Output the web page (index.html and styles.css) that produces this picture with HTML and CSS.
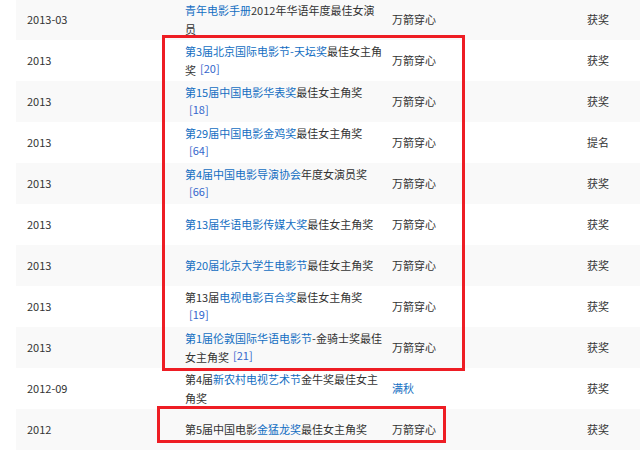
FILE: index.html
```html
<!DOCTYPE html>
<html lang="zh-CN">
<head>
    <meta charset="UTF-8">
    <meta name="viewport" content="width=device-width, initial-scale=1.0">
    <title>获奖记录</title>
    <link rel="stylesheet" href="styles.css">
</head>
<body>
    <div class="page">
        <table class="awards">
            <colgroup>
                <col class="col-year">
                <col class="col-award">
                <col class="col-work">
                <col class="col-result">
            </colgroup>
            <tbody>
                <tr>
                    <td>2013-03</td>
                    <td><a href="#">青年电影手册</a>2012年华语年度最佳女演员</td>
                    <td>万箭穿心</td>
                    <td>获奖</td>
                </tr>
                <tr>
                    <td>2013</td>
                    <td><a href="#">第3届北京国际电影节-天坛奖</a>最佳女主角奖<sup>[20]</sup></td>
                    <td>万箭穿心</td>
                    <td>获奖</td>
                </tr>
                <tr>
                    <td>2013</td>
                    <td><a href="#">第15届中国电影华表奖</a>最佳女主角奖<sup>[18]</sup></td>
                    <td>万箭穿心</td>
                    <td>获奖</td>
                </tr>
                <tr>
                    <td>2013</td>
                    <td><a href="#">第29届中国电影金鸡奖</a>最佳女主角奖<sup>[64]</sup></td>
                    <td>万箭穿心</td>
                    <td>提名</td>
                </tr>
                <tr>
                    <td>2013</td>
                    <td><a href="#">第4届中国电影导演协会</a>年度女演员奖<sup>[66]</sup></td>
                    <td>万箭穿心</td>
                    <td>获奖</td>
                </tr>
                <tr>
                    <td>2013</td>
                    <td><a href="#">第13届华语电影传媒大奖</a>最佳女主角奖</td>
                    <td>万箭穿心</td>
                    <td>获奖</td>
                </tr>
                <tr>
                    <td>2013</td>
                    <td><a href="#">第20届北京大学生电影节</a>最佳女主角奖</td>
                    <td>万箭穿心</td>
                    <td>获奖</td>
                </tr>
                <tr>
                    <td>2013</td>
                    <td>第13届<a href="#">电视电影百合奖</a>最佳女主角奖<sup>[19]</sup></td>
                    <td>万箭穿心</td>
                    <td>获奖</td>
                </tr>
                <tr>
                    <td>2013</td>
                    <td><a href="#">第1届伦敦国际华语电影节</a>-金骑士奖最佳女主角奖<sup>[21]</sup></td>
                    <td>万箭穿心</td>
                    <td>获奖</td>
                </tr>
                <tr>
                    <td>2012-09</td>
                    <td>第4届<a href="#">新农村电视艺术节</a>金牛奖最佳女主角奖</td>
                    <td><a href="#">满秋</a></td>
                    <td>获奖</td>
                </tr>
                <tr>
                    <td>2012</td>
                    <td>第5届中国电影<a href="#">金猛龙奖</a>最佳女主角奖</td>
                    <td>万箭穿心</td>
                    <td>获奖</td>
                </tr>
            </tbody>
        </table>
        <!-- highlight frames drawn over the table -->
        <div class="mark mark-big"></div>
        <div class="mark mark-small"></div>
    </div>
</body>
</html>
```

FILE: styles.css
```css
body {
    margin: 0;
    background: #ffffff;
    font-family: "Noto Sans CJK SC", "Noto Sans", sans-serif;
    font-size: 11px;
    color: #333333;
    overflow: hidden;
}
.page {
    position: relative;
    padding-left: 16px;
}
.awards {
    width: 624px;
    margin-top: -1px;
    border-collapse: collapse;
    border-spacing: 0;
    table-layout: fixed;
}
.col-year {
    width: 159px;
}
.col-award {
    width: 209px;
}
.col-work {
    width: 195px;
}
.awards tr:nth-child(odd) td {
    background: #f9f9f9;
}
.awards td {
    box-sizing: border-box;
    height: 41px;
    padding: 0 0 0 8px;
    line-height: 19px;
    vertical-align: middle;
}
.awards td:first-child {
    padding-left: 11px;
}
.awards td:nth-child(2) {
    padding-left: 10px;
}
a {
    color: #136ec2;
    text-decoration: none;
}
sup {
    color: #3366cc;
    font-size: 11px;
    line-height: 0;
    vertical-align: 2px;
    padding-left: 4px;
}
.mark {
    position: absolute;
    box-sizing: border-box;
    border: 3px solid #ee1d24;
}
.mark-big {
    left: 162px;
    top: 36px;
    width: 303px;
    height: 336px;
}
.mark-small {
    left: 157px;
    top: 407px;
    width: 289px;
    height: 37px;
}
```
